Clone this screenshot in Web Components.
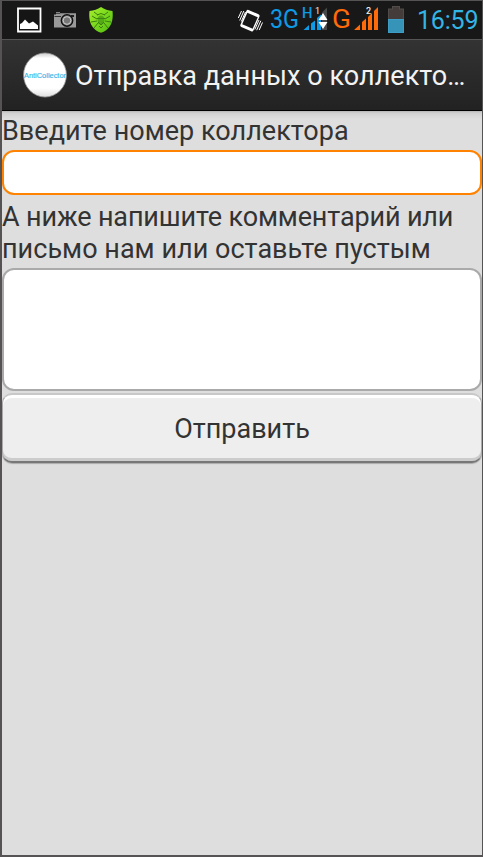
<!DOCTYPE html>
<html lang="ru">
<head>
<meta charset="utf-8">
<title>AntiCollector</title>
<style>
  body {
    margin: 0;
    font-family: Roboto, "Noto Sans", sans-serif;
    background: #dedede;
  }

  .tight {
    letter-spacing: -.14px;
  }
</style>
</head>
<body>
<phone-screen>
  <status-bar slot="status" time="16:59"></status-bar>
  <action-bar slot="header" logo="AntiCollector">Отправка данных о коллекто…</action-bar>
  <form-label>Введите номер коллектора</form-label>
  <text-box active style="--box-height: 45px"></text-box>
  <form-label style="--label-space: 6px"><span class="tight">А ниже напишите комментарий или</span><br>письмо нам или оставьте пустым</form-label>
  <text-box style="--box-height: 123px"></text-box>
  <send-button>Отправить</send-button>
</phone-screen>

<script>
class PhoneScreen extends HTMLElement {
    constructor() {
        super();
        this.attachShadow({mode: 'open'}).innerHTML = `
        <style>
          :host {
            display: flex;
            flex-direction: column;
            box-sizing: border-box;
            width: 483px;
            height: 857px;
            border: solid #555354;
            border-width: 1px 1px 2px 2px;
            background: #dedede;
            overflow: hidden;
          }

          main {
            flex: 1;
            background: linear-gradient(#b4b4b4, #d0d0d0 2px, #dedede 8px);
          }
        </style>
        <slot name="status"></slot>
        <slot name="header"></slot>
        <main><slot></slot></main>`;
    }
}

class StatusBar extends HTMLElement {
    connectedCallback() {
        this.attachShadow({mode: 'open'}).innerHTML = `
        <style>
          :host {
            display: flex;
            height: 38px;
            background: #181818;
            border-bottom: 1px solid #555;
            white-space: nowrap;
          }

          svg {
            flex: none;
            height: 38px;
          }

          .notifications {
            display: flex;
            gap: 12px;
            width: 220px;
            padding-left: 15px;
          }

          .system {
            display: flex;
          }
        </style>

        <div class="notifications">
          <svg width="25" viewBox="17 1 25 38">
            <path d="M18 8.5H40.5V31.5H18Z" fill="#151515" stroke="#fff" stroke-width="1.8"/>
            <path d="M20 29V24L22 23L25 19.500L29 23.500L33 21.500L38 25.500V29Z" fill="#fff"/>
          </svg>
          <svg width="23" viewBox="54 1 23 38">
            <path d="M54 14.5H56V12H60V13.2H76V27.5H54Z" fill="#999"/>
            <path d="M56 13.3H60M54.5 16.5H61" stroke="#333" stroke-width="1"/>
            <rect x="71" y="15" width="3" height="2" fill="#222"/>
            <circle cx="67" cy="20.5" r="5.7" fill="#888" stroke="#111" stroke-width="1.4"/>
            <circle cx="67" cy="20.5" r="3.8" fill="#777" stroke="#ddd" stroke-width=".8"/>
          </svg>
          <svg width="25" viewBox="89 1 25 38">
            <defs>
              <linearGradient id="shield" x1="0" y1="0" x2="1" y2="1">
                <stop offset="0" stop-color="#a9ed2e"/>
                <stop offset=".5" stop-color="#79d91c"/>
                <stop offset="1" stop-color="#4fb613"/>
              </linearGradient>
            </defs>
            <path d="M101 7Q106 10.5 112.500 11Q114.500 28 101 32.800Q87.500 28 89.500 11Q96 10.500 101 7Z" fill="url(#shield)"/>
            <g fill="none" stroke="#3c7d12" stroke-width="1">
              <path d="M98 15L94 12M104 15L108 12M97 19L92 16M105 19L110 16M97 21L91 22M105 21L111 22M98 23L94 28M104 23L108 28"/>
              <path d="M97 15Q101 12 105 15M97 18.500H105M98 22L101 25L104 22M99 26L101 28L103 26"/>
            </g>
            <ellipse cx="101" cy="20" rx="3.500" ry="4.500" fill="#3d8a12" opacity=".6"/>
          </svg>
        </div>

        <div class="system">
          <svg width="245" viewBox="237 1 245 38" font-family="Roboto, sans-serif">
            <!-- vibrate -->
            <path d="M248.500 10L258.500 14.300Q260 15 259.500 16.500L253.500 30.300Q252.800 32 251.200 31.300L241.300 27Q239.800 26.200 240.400 24.800L246.400 11Q247.200 9.400 248.500 10Z" fill="#fff"/>
            <path d="M247.300 12.800L257.800 17.300L252.700 28.800L242.200 24.300Z" fill="#181818"/>
            <path d="M238.300 18L241.500 11M239.700 20.500L243.800 11M241.300 21.500L245.500 12M254.800 29.500L259 20M256.700 30.200L260.800 20.800M259.200 30L262.500 22.500" fill="none" stroke="#fff" stroke-width="1"/>

            <text x="270" y="28" font-size="25" textLength="29" lengthAdjust="spacingAndGlyphs" fill="#0d9ae6">3G</text>
            <text x="302" y="17.500" font-size="14.500" font-weight="500" textLength="10.500" lengthAdjust="spacingAndGlyphs" fill="#0d9ae6">H</text>
            <g fill="#0d9ae6">
              <path d="M303.500 30L309 25V30ZM311 23.500L315 20.500V30H311ZM317 18L321 14.500V30H317Z"/>
            </g>
            <path d="M322 12.500L327 7.500V30H322Z" fill="#484848"/>
            <text x="315" y="14" font-size="9" fill="#eee">1</text>
            <path d="M323 13L327.500 20H318.500ZM318.500 22H327.500L323 29Z" fill="#fff"/>

            <text x="332" y="28" font-size="26" textLength="19" lengthAdjust="spacingAndGlyphs" fill="#ff6a0a">G</text>
            <path d="M354 30L360 24.500V30ZM362 22L366 18.500V30H362ZM368 17L372 13V30H368ZM374 11L378 7V30H374Z" fill="#ff6a0a"/>
            <text x="366" y="14" font-size="9" font-weight="500" fill="#eee">2</text>

            <!-- battery -->
            <path d="M388 8.500H392V6H400V8.500H404V33H388Z" fill="#514b4a"/>
            <path d="M389 9.500H393V7H399V9.500H403V20H389Z" fill="#433c3b"/>
            <path d="M388 19H404V33H388Z" fill="#3d9dc4"/>
            <path d="M389 20H403V32H389Z" fill="#3594b8"/>

            <text x="417" y="29.300" font-size="25" textLength="61.500" fill="#33b5e5">${this.getAttribute('time')}</text>
          </svg>
        </div>`;
    }
}

class ActionBar extends HTMLElement {
    connectedCallback() {
        this.attachShadow({mode: 'open'}).innerHTML = `
        <style>
          :host {
            display: flex;
            align-items: center;
            height: 70px;
            padding-left: 20px;
            gap: 7px;
            background: linear-gradient(#333, #222);
            border-bottom: 1px solid #000;
            color: #f3f3f3;
            white-space: nowrap;
          }

          svg {
            flex: none;
          }

          h1 {
            margin: 2px 0 0;
            font-size: 27px;
            font-weight: 400;
            line-height: 32px;
            letter-spacing: .04px;
          }
        </style>
        <svg width="46" height="46" viewBox="0 0 46 46">
          <defs>
            <linearGradient id="ball" x1="0" y1="0" x2="0" y2="1">
              <stop offset="0" stop-color="#ccc"/>
              <stop offset=".12" stop-color="#fff"/>
              <stop offset=".8" stop-color="#fff"/>
              <stop offset="1" stop-color="#ddd"/>
            </linearGradient>
          </defs>
          <ellipse cx="23" cy="23" rx="21.400" ry="22" fill="url(#ball)" stroke="#999" stroke-width=".8"/>
          <text x="2" y="25.500" font-family="Liberation Sans, sans-serif" font-size="6.500" textLength="42" lengthAdjust="spacingAndGlyphs" fill="#35b8ea" stroke="#35b8ea" stroke-width=".15">${this.getAttribute('logo')}</text>
        </svg>
        <h1><slot></slot></h1>`;
    }
}

class FormLabel extends HTMLElement {
    constructor() {
        super();
        this.attachShadow({mode: 'open'}).innerHTML = `
        <style>
          :host {
            display: block;
            padding-top: var(--label-space, 4px);
            padding-bottom: 3px;
            color: #333;
            font-size: 27px;
            line-height: 32px;
            letter-spacing: .03px;
            white-space: nowrap;
          }
        </style>
        <slot></slot>`;
    }
}

class TextBox extends HTMLElement {
    constructor() {
        super();
        this.attachShadow({mode: 'open'}).innerHTML = `
        <style>
          :host {
            display: block;
            box-sizing: border-box;
            height: var(--box-height);
            border: 2px solid #aaa;
            border-radius: 12px;
            background: #fff;
          }

          :host([active]) {
            border-color: #ff8200;
          }
        </style>`;
    }
}

class SendButton extends HTMLElement {
    constructor() {
        super();
        this.attachShadow({mode: 'open'}).innerHTML = `
        <style>
          :host {
            display: block;
            padding-top: 2px;
          }

          button {
            display: block;
            box-sizing: border-box;
            width: 100%;
            height: 70px;
            padding: 2px 0 0;
            border: solid;
            border-width: 2px 1px;
            border-color: #c8c8c8 #aaa #777;
            border-radius: 10px;
            background: #eee;
            box-shadow: inset 0 3px #fff, inset 0 -3px #ccc, 0 1px 1px #aaa;
            color: #333;
            font: 27px/32px Roboto, "Noto Sans", sans-serif;
          }
        </style>
        <button><slot></slot></button>`;
    }
}

customElements.define('phone-screen', PhoneScreen);
customElements.define('status-bar', StatusBar);
customElements.define('action-bar', ActionBar);
customElements.define('form-label', FormLabel);
customElements.define('text-box', TextBox);
customElements.define('send-button', SendButton);
</script>
</body>
</html>
